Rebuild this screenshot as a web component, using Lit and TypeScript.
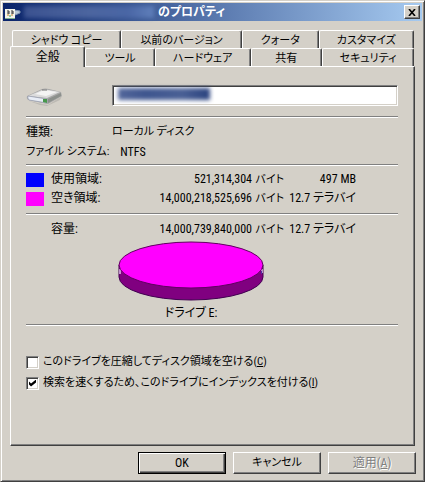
import { LitElement, html, css, svg } from "lit";
import { customElement, property, state } from "lit/decorators.js";
import { classMap } from "lit/directives/class-map.js";

const BACK_TABS = [
  { label: "シャドウ コピー", grow: 109 },
  { label: "以前のバージョン", grow: 121 },
  { label: "クォータ", grow: 76 },
  { label: "カスタマイズ", grow: 95 },
];

const FRONT_TABS = [
  { label: "全般", grow: 75 },
  { label: "ツール", grow: 69 },
  { label: "ハードウェア", grow: 96 },
  { label: "共有", grow: 71 },
  { label: "セキュリティ", grow: 92 },
];

@customElement("capacity-pie")
export class CapacityPie extends LitElement {
  static styles = css`
    :host {
      display: block;
    }
    .pie {
      display: block;
      width: 146px;
      height: 60px;
    }
  `;

  render() {
    return html`
      <svg class="pie" viewBox="0 0 146 60" role="img" aria-label="ディスクの使用状況">
        <path d="M1 24 V36 A72 23 0 0 0 145 36 V24 Z" fill="#800080" stroke="#400050" />
        ${svg`
          <path d="M2 28 V33 M144 28 V32" stroke="#e8d0f8" stroke-width="1.4" />
          <path d="M143.5 30 V33" stroke="#5030a0" />
        `}
        <ellipse cx="73" cy="24" rx="72" ry="23" fill="#ff00ff" stroke="#600060" />
      </svg>
    `;
  }
}

@customElement("tab-strip")
export class TabStrip extends LitElement {
  @property({ attribute: false }) tabs: { label: string; grow: number }[] = [];
  @property() selected = "";

  static styles = css`
    :host {
      display: block;
    }
    .strip {
      display: flex;
      height: 18px;
    }
    .tab {
      min-width: 0;
      margin: 0;
      padding: 2px 0 0;
      border: 1px solid;
      border-color: #fff #404040 transparent #fff;
      border-bottom: 0;
      border-radius: 2px 2px 0 0;
      box-shadow: inset -1px 0 #808080;
      background: #d4d0c8;
      color: #000;
      font: inherit;
      font-feature-settings: inherit;
      line-height: 16px;
      white-space: nowrap;
    }
    .selected {
      z-index: 1;
      margin: -2px 0 -1px -2px;
      padding: 0;
      font-size: 12px;
    }
  `;

  render() {
    return html`
      <div class="strip" role="tablist">
        ${this.tabs.map(
          (t) => html`<button
            class=${classMap({ tab: true, selected: t.label === this.selected })}
            role="tab"
            aria-selected=${t.label === this.selected ? "true" : "false"}
            style="flex: ${t.grow} 1 0"
          >${t.label}</button>`
        )}
      </div>
    `;
  }
}

@customElement("app-root")
export class AppRoot extends LitElement {
  @state() private compress = false;
  @state() private indexed = true;

  static styles = css`
    :host {
      display: block;
      min-height: 100vh;
      background: #d4d0c8;
      color: #000;
      font-family: "Roboto Condensed", "Liberation Sans Narrow", "Roboto", "Noto Sans CJK JP", sans-serif;
      font-size: 11px;
      line-height: 16px;
      font-feature-settings: "palt";
    }
    * {
      box-sizing: border-box;
    }
    .window {
      display: flex;
      flex-direction: column;
      min-height: 100vh;
      padding: 2px;
      border: 1px solid;
      border-color: #d4d0c8 #404040 #404040 #d4d0c8;
      box-shadow: inset 1px 1px #fff, inset -1px -1px #808080;
    }
    .title {
      display: flex;
      align-items: center;
      height: 18px;
      padding: 0 2px;
      background: linear-gradient(90deg, #0a246a, #a6caf0);
      color: #fff;
    }
    .app-icon {
      width: 16px;
      height: 16px;
      flex: none;
    }
    .smear {
      height: 12px;
      filter: blur(2px);
    }
    .title-smear {
      width: 130px;
      margin: 0 4px 0 3px;
      background: linear-gradient(90deg, #3b5290, #4c659f 50%, #4a66a5 80%, #5f7fba);
    }
    .title-text {
      flex: 1;
      margin: 0;
      font-size: 12px;
      font-weight: 700;
      line-height: 18px;
      white-space: nowrap;
    }
    .close {
      display: grid;
      place-items: center;
      width: 16px;
      height: 14px;
    }
    .close svg {
      width: 8px;
      height: 7px;
    }
    .button,
    .close {
      padding: 0;
      border: 1px solid;
      border-color: #fff #404040 #404040 #fff;
      border-radius: 0;
      box-shadow: inset -1px -1px #808080;
      background: #d4d0c8;
      color: #000;
      font: inherit;
      font-feature-settings: inherit;
    }
    .body {
      display: flex;
      flex: 1;
      flex-direction: column;
      padding: 9px 6px 5px 7px;
    }
    .tabs {
      padding: 0 2px;
    }
    .panel {
      flex: 1;
      margin-right: 1px;
      padding: 18px 16px 12px 15px;
      border: 1px solid;
      border-color: #fff #404040 #404040 #fff;
      box-shadow: inset -1px -1px #808080;
    }
    .name-row {
      display: flex;
      align-items: center;
    }
    .disk {
      width: 38px;
      height: 20px;
      margin-right: 48px;
      flex: none;
    }
    .name {
      position: relative;
      flex: 1;
    }
    .field {
      display: block;
      width: 100%;
      height: 21px;
      padding: 0 4px;
      border: 1px solid;
      border-color: #808080 #fff #fff #808080;
      box-shadow: inset 1px 1px #404040, inset -1px -1px #d4d0c8;
      background: #fff;
      font: inherit;
    }
    .name-smear {
      position: absolute;
      top: 3px;
      left: 6px;
      width: 92px;
      background: linear-gradient(90deg, #53679b, #3f568f 30%, #4a6095 70%, #2b437f);
      pointer-events: none;
    }
    .rule {
      width: 100%;
      height: 2px;
      margin: 0;
      border: 0;
      border-top: 1px solid #808080;
      border-bottom: 1px solid #fff;
    }
    .rule-name {
      margin-top: 10px;
    }
    .facts {
      margin: 4px 0 2px;
    }
    .fact {
      display: flex;
      gap: 15px;
      height: 20px;
      line-height: 20px;
    }
    .fact dt {
      min-width: 71px;
    }
    .fact dd {
      margin: 0;
      font-size: 12px;
    }
    .fact .kana {
      font-size: 11px;
    }
    .fact .wide {
      padding-right: 6px;
      margin-right: -10px;
    }
    .usage {
      width: 100%;
      margin-top: 4px;
      border-spacing: 0;
      font-size: 12px;
    }
    .usage th,
    .usage td {
      height: 19px;
      padding: 0;
      font-weight: 400;
      line-height: 19px;
      text-align: right;
      white-space: nowrap;
    }
    .usage th {
      text-align: left;
    }
    .usage td.line {
      height: 12px;
      line-height: 0;
    }
    .key {
      width: 25px;
    }
    .bytes {
      width: 140px;
    }
    .usage .unit {
      width: 32px;
      font-size: 11px;
    }
    .size {
      width: 72px;
    }
    .end {
      width: 42px;
    }
    .swatch {
      display: block;
      width: 18px;
      height: 14px;
    }
    .used {
      background: #0000ff;
    }
    .free {
      background: #ff00ff;
    }
    .chart {
      display: flex;
      flex-direction: column;
      align-items: center;
      gap: 3px;
      width: 292px;
      margin: 2px 0 2px 19px;
    }
    .caption {
      margin: 0;
      font-size: 12px;
      line-height: 18px;
    }
    .options {
      display: grid;
      gap: 5px;
      margin-top: 28px;
    }
    .option {
      display: flex;
      align-items: center;
      gap: 4px;
      white-space: nowrap;
    }
    .box {
      display: grid;
      place-items: center;
      flex: none;
      width: 13px;
      height: 13px;
      margin: 0;
      appearance: none;
      border: 1px solid;
      border-color: #808080 #fff #fff #808080;
      box-shadow: inset 1px 1px #404040, inset -1px -1px #d4d0c8;
      background: #fff;
    }
    .box:checked::after {
      content: "";
      width: 7px;
      height: 7px;
      background: #000;
      clip-path: polygon(0 29%, 29% 57%, 100% 0, 100% 43%, 29% 100%, 0 71%);
    }
    .actions {
      display: flex;
      justify-content: flex-end;
      gap: 7px;
      margin-top: 6px;
    }
    .button {
      width: 88px;
      height: 22px;
    }
    .default {
      border-color: #000;
      box-shadow: inset 1px 1px #fff, inset -1px -1px #404040, inset -2px -2px #808080;
    }
    .button:disabled {
      color: #808080;
      text-shadow: 1px 1px #fff;
    }
    .kanji {
      font-size: 12px;
    }
  `;

  private sizeRow(kind: string, label: string, bytes: string, size: string) {
    return html`
      <tr>
        <td class="key">${kind ? html`<span class="swatch ${kind}"></span>` : ""}</td>
        <th scope="row">${label}</th>
        <td class="bytes">${bytes}</td>
        <td class="unit">バイト</td>
        <td class="size">${size}</td>
        <td class="end"></td>
      </tr>
    `;
  }

  render() {
    return html`
      <main class="window">
        <header class="title">
          <svg class="app-icon" viewBox="0 0 16 16" aria-hidden="true">
            <path d="M9 6 L15 7 L15 9 L10 11 Z" fill="#b8c8d8" stroke="#8095b0" />
            <rect x="0" y="5" width="10" height="10" fill="#f4f4ea" />
            <path d="M0 14.5 H10" stroke="#80b090" />
            <path d="M2 7 H4 V10 M6 7 H8 V10 M2 9 H4 M6 9 H8" stroke="#303030" fill="none" />
            <path d="M2 11 H4 M6 11 H8" stroke="#c08030" />
            <path d="M4 12 H6" stroke="#30a060" />
          </svg>
          <span class="smear title-smear"></span>
          <h1 class="title-text">のプロパティ</h1>
          <button class="close" aria-label="閉じる">
            <svg viewBox="0 0 8 7" aria-hidden="true">
              <path d="M1 0 L7 7 M7 0 L1 7" stroke="#000" stroke-width="1.6" />
            </svg>
          </button>
        </header>
        <div class="body">
          <div class="tabs">
            <tab-strip .tabs=${BACK_TABS}></tab-strip>
            <tab-strip .tabs=${FRONT_TABS} selected="全般"></tab-strip>
          </div>
          <section class="panel">
            <div class="name-row">
              <svg class="disk" viewBox="0 0 38 20" aria-hidden="true">
                <path d="M3 15 L16 18 L22 19 L36 10 L34 14 L21 20 L14 19 Z" fill="#bdbab4" />
                <path d="M1 10 L16 3 Q19 2 23 3 L35 6 L36 10 L22 18 L2 14 Q0 12 1 10 Z" fill="#a8a8a8" />
                <path d="M2 10 L16 4 Q19 3 23 4 L34 6 L21 12 Z" fill="#dcdcdc" />
                <path d="M9 8 L18 4 L31 6 L20 10 Z" fill="#f4f4f4" />
                <path d="M2 10 L21 13 V17 L3 14 Q1 12 2 10 Z" fill="#e8edf6" stroke="#9aa0b0" stroke-width=".8" />
                <path d="M17 13 L21 13 V17 L17 16 Z" fill="#48984c" />
                <path d="M22 13 L35 7 V10 L22 17 Z" fill="#8c908c" />
                <path d="M16 4 H21" stroke="#777" />
              </svg>
              <div class="name">
                <input class="field" type="text" aria-label="ボリューム名" />
                <span class="smear name-smear"></span>
              </div>
            </div>
            <hr class="rule rule-name" />
            <dl class="facts">
              <div class="fact">
                <dt class="kanji">種類:</dt>
                <dd class="kana">ローカル ディスク</dd>
              </div>
              <div class="fact">
                <dt class="wide">ファイル システム:</dt>
                <dd>NTFS</dd>
              </div>
            </dl>
            <hr class="rule" />
            <table class="usage">
              <tbody>
                ${this.sizeRow("used", "使用領域:", "521,314,304", "497 MB")}
                ${this.sizeRow("free", "空き領域:", "14,000,218,525,696", "12.7 テラバイ")}
                <tr>
                  <td class="line" colspan="6"><hr class="rule" /></td>
                </tr>
                ${this.sizeRow("", "容量:", "14,000,739,840,000", "12.7 テラバイ")}
              </tbody>
            </table>
            <div class="chart">
              <capacity-pie></capacity-pie>
              <p class="caption">ドライブ E:</p>
            </div>
            <hr class="rule" />
            <div class="options">
              <label class="option">
                <input
                  class="box"
                  type="checkbox"
                  .checked=${this.compress}
                  @change=${(e: Event) => (this.compress = (e.target as HTMLInputElement).checked)}
                />
                <span>このドライブを圧縮してディスク領域を空ける(<u>C</u>)</span>
              </label>
              <label class="option">
                <input
                  class="box"
                  type="checkbox"
                  .checked=${this.indexed}
                  @change=${(e: Event) => (this.indexed = (e.target as HTMLInputElement).checked)}
                />
                <span>検索を速くするため、このドライブにインデックスを付ける(<u>I</u>)</span>
              </label>
            </div>
          </section>
          <footer class="actions">
            <button class="button default kanji">OK</button>
            <button class="button">キャンセル</button>
            <button class="button kanji" disabled>適用(<u>A</u>)</button>
          </footer>
        </div>
      </main>
    `;
  }
}
